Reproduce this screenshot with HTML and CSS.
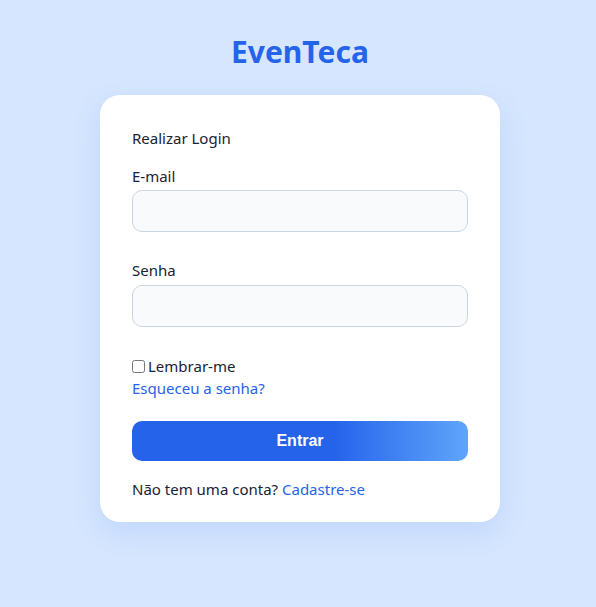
FILE: index.html
```html
<!DOCTYPE html>
<html lang="pt-BR">
<head>
<meta charset="utf-8">
<title>EvenTeca - Login</title>
<link rel="stylesheet" href="styles.css">
</head>
<body>
<main class="page">
  <h1 class="brand">EvenTeca</h1>
  <form class="card">
    <p class="card-title">Realizar Login</p>
    <label class="label" for="email">E-mail</label>
    <input class="input" id="email" type="email">
    <label class="label label-gap" for="senha">Senha</label>
    <input class="input" id="senha" type="password">
    <label class="remember"><input type="checkbox" class="check"> Lembrar-me</label>
    <a class="link" href="#">Esqueceu a senha?</a>
    <button class="btn" type="button">Entrar</button>
    <p class="footer">Não tem uma conta? <a class="link" href="#">Cadastre-se</a></p>
  </form>
</main>
</body>
</html>
```

FILE: styles.css
```css
* { box-sizing: border-box; }
html, body { margin: 0; }
body {
  background: #d6e6fe;
  font-family: "Noto Sans", "Open Sans", sans-serif;
  color: #1a2233;
  min-height: 607px;
}
.page {
  display: flex;
  flex-direction: column;
  align-items: center;
  padding: 32px 0 0 4px;
}
.brand {
  margin: 0 0 23px;
  font-size: 30px;
  line-height: 40px;
  font-weight: 700;
  color: #2563eb;
}
.card {
  width: 400px;
  background: #fff;
  border-radius: 20px;
  padding: 32px 32px 22px;
  display: flex;
  flex-direction: column;
  box-shadow: 0 10px 30px rgba(37, 99, 235, 0.12);
}
.card-title {
  margin: 0 0 16px;
  font-size: 15px;
  line-height: 22px;
}
.label {
  font-size: 15px;
  line-height: 22px;
  margin-bottom: 3px;
}
.label-gap { margin-top: 27px; margin-bottom: 4px; }
.input {
  height: 42px;
  width: 100%;
  border: 1px solid #cbd5e1;
  border-radius: 10px;
  background: #f8fafc;
  font: inherit;
}
.remember {
  margin-top: 28px;
  font-size: 15px;
  line-height: 22px;
  display: flex;
  align-items: center;
  gap: 3px;
}
.check {
  margin: 0;
  width: 13px;
  height: 13px;
}
.link {
  font-size: 15px;
  line-height: 22px;
  color: #2563eb;
  text-decoration: none;
}
.btn {
  margin-top: 22px;
  height: 40px;
  border: 0;
  border-radius: 10px;
  background: linear-gradient(90deg, #2563eb 0%, #2563eb 60%, #60a5fa 100%);
  color: #fff;
  font-family: "Liberation Sans", Arial, sans-serif;
  font-weight: 700;
  font-size: 16px;
}
.footer {
  margin: 17px 0 0;
  font-size: 15px;
  line-height: 22px;
}
```
